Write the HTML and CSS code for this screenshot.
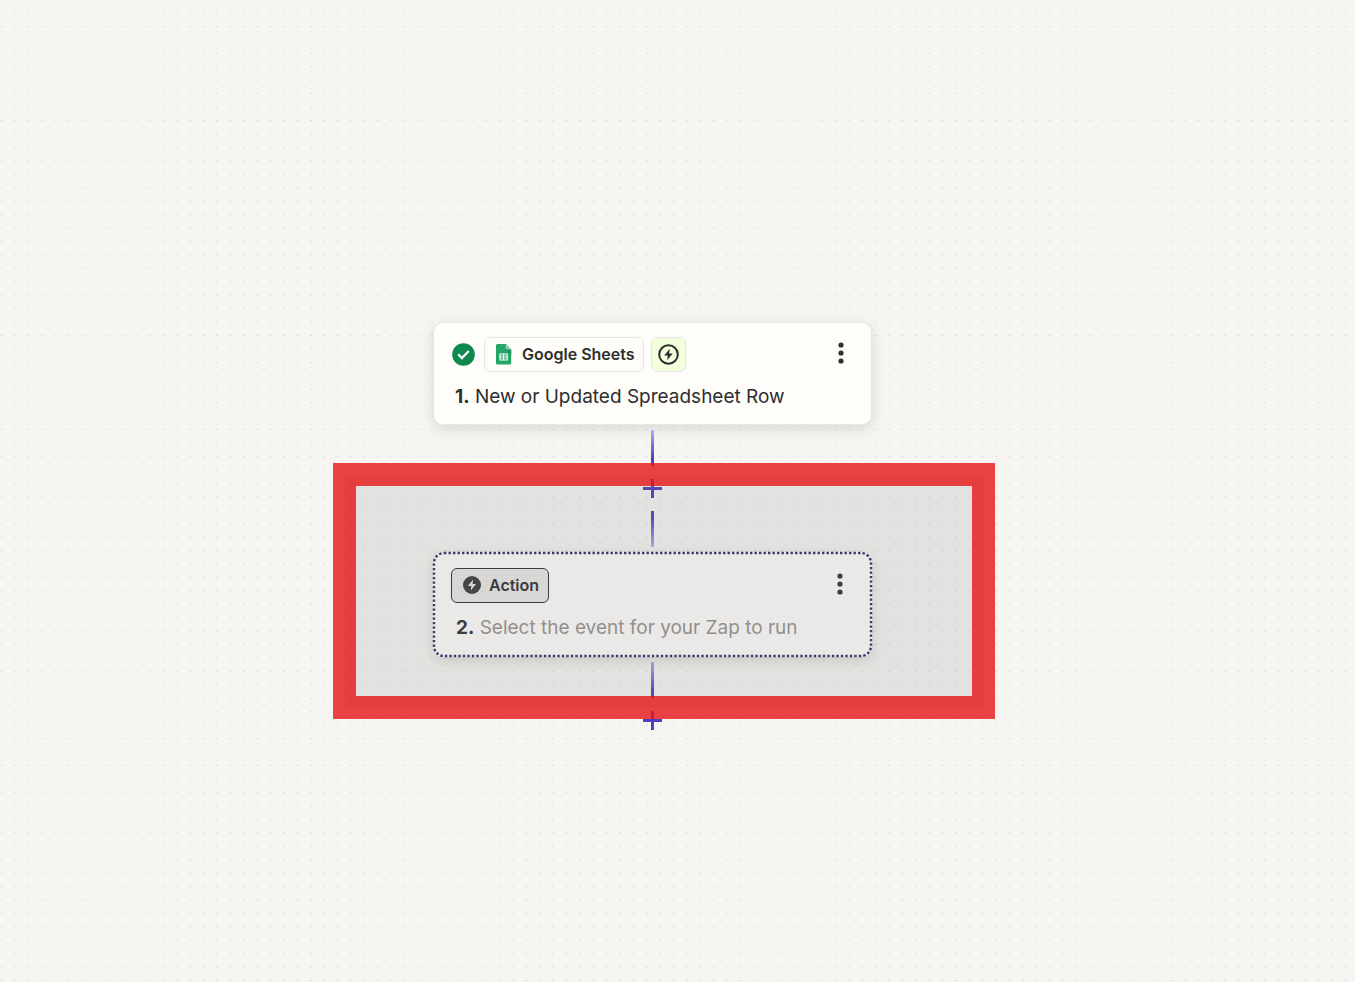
FILE: index.html
```html
<!DOCTYPE html>
<html lang="en">
<head>
  <meta charset="UTF-8">
  <title>Zap editor</title>
  <link rel="stylesheet" href="styles.css">
</head>
<body>
  <main class="canvas">
    <div class="flow">
      <section class="step">
        <div class="step-header">
          <svg class="status" viewBox="0 0 23 23" aria-hidden="true">
            <circle cx="11.5" cy="11.5" r="11.3" fill="#0f884e"/>
            <path d="M6.2 11.3l3.7 3.7 6.9-7" fill="none" stroke="#fff" stroke-width="2.3"/>
          </svg>
          <button class="badge app" type="button">
            <svg width="16" height="21" viewBox="0 0 16 21" aria-hidden="true">
              <path d="M1.5 0H10l5.2 5.5V19a1.5 1.5 0 0 1-1.5 1.5H1.5A1.5 1.5 0 0 1 0 19V1.5A1.5 1.5 0 0 1 1.5 0z" fill="#23a566"/>
              <path d="M10 5.5h5.2V11z" fill="#1c8f57"/>
              <path d="M9.7 0l5.5 5.5h-4A1.5 1.5 0 0 1 9.7 4z" fill="#8ed1b1"/>
              <path d="M3.4 9.5h8.4v7H3.4z" fill="#fff"/>
              <path d="M4.5 10.6h2.6v1.1H4.5zM8.1 10.6h2.6v1.1H8.1zM4.5 12.5h2.6v1H4.5zM8.1 12.5h2.6v1H8.1zM4.5 14.3h2.6v1.1H4.5zM8.1 14.3h2.6v1.1H8.1z" fill="#23a566"/>
            </svg>
            Google Sheets
          </button>
          <button class="badge trigger" type="button" aria-label="Trigger">
            <svg width="21" height="21" viewBox="0 0 21 21" aria-hidden="true">
              <circle cx="10.5" cy="10.5" r="9.3" fill="none" stroke="#2d2e2e" stroke-width="2"/>
              <path d="M11.7 4.8L6.2 11.5h3.6l-.6 4.7 5.5-6.7h-3.6z" fill="#2d2e2e"/>
            </svg>
          </button>
          <button class="menu" type="button" aria-label="Step menu">
            <svg width="6" height="22" viewBox="0 0 6 22" aria-hidden="true">
              <circle cx="3" cy="3" r="2.6"/><circle cx="3" cy="11" r="2.6"/><circle cx="3" cy="19" r="2.6"/>
            </svg>
          </button>
        </div>
        <p class="step-title"><strong>1.</strong> New or Updated Spreadsheet Row</p>
      </section>

      <div class="connector">
        <span class="line"></span>
        <button class="add" type="button" aria-label="Add step"></button>
        <span class="line line-out"></span>
      </div>

      <section class="step step-empty">
        <svg class="outline" aria-hidden="true">
          <rect width="100%" height="100%" rx="10"/>
        </svg>
        <div class="step-header">
          <button class="badge action" type="button">
            <svg width="18" height="18" viewBox="0 0 18 18" aria-hidden="true">
              <circle cx="9" cy="9" r="9" fill="#3b3b3a"/>
              <path d="M10.1 3.6L4.9 9.9h3.4l-.5 4.5L13 8.1H9.6z" fill="#e9e8e4"/>
            </svg>
            Action
          </button>
          <button class="menu" type="button" aria-label="Step menu">
            <svg width="6" height="22" viewBox="0 0 6 22" aria-hidden="true">
              <circle cx="3" cy="3" r="2.6"/><circle cx="3" cy="11" r="2.6"/><circle cx="3" cy="19" r="2.6"/>
            </svg>
          </button>
        </div>
        <p class="step-title"><strong>2.</strong> <span class="placeholder">Select the event for your Zap to run</span></p>
      </section>

      <div class="connector">
        <span class="line"></span>
        <button class="add" type="button" aria-label="Add step"></button>
      </div>

      <div class="highlight"></div>
    </div>
  </main>
</body>
</html>
```

FILE: styles.css
```css
* { box-sizing: border-box; }
body {
  margin: 0;
  font-family: Inter, "Liberation Sans", sans-serif;
  color: #2d2e2e;
}
button {
  padding: 0;
  border: none;
  background: none;
  color: inherit;
  font: inherit;
  cursor: pointer;
}
.canvas {
  display: flex;
  justify-content: center;
  min-height: 100vh;
  padding: 322px 50px 0 0;
  background-color: #f6f5f1;
  background-image: radial-gradient(circle at 2px 12px, #dcdbd7 0, #dcdbd7 1px, transparent 1px);
  background-size: calc(121px / 9) calc(121px / 9);
  background-position: 0 1px;
}
.flow {
  position: relative;
  width: 439px;
  align-self: flex-start;
}

/* step cards */
.step {
  padding: 14px 18px 15px;
  border: 1px solid #e8e7e4;
  border-radius: 10px;
  background: #fffdf9;
  box-shadow: 0 4px 14px rgba(0, 0, 0, 0.12);
}
.step-empty {
  position: relative;
  padding: 16px 18px 17px;
  border: none;
}
.outline {
  position: absolute;
  top: 1px;
  left: 1px;
  width: calc(100% - 2px);
  height: calc(100% - 2px);
  overflow: visible;
  pointer-events: none;
}
.outline rect {
  fill: none;
  stroke: #352c68;
  stroke-width: 2.4;
  stroke-dasharray: 2.4 2.1;
}
.step-header {
  display: flex;
  align-items: center;
  height: 35px;
}
.status {
  width: 23px;
  height: 23px;
  margin-right: 9px;
}
.badge {
  display: flex;
  align-items: center;
  height: 35px;
  border: 1px solid #e8e7e4;
  border-radius: 6px;
  font-size: 16px;
  font-weight: 600;
}
.app {
  gap: 10px;
  padding: 0 8px 1px 11px;
}
.trigger {
  justify-content: center;
  width: 35px;
  margin-left: 7px;
  background: #f3ffdc;
}
.action {
  gap: 8px;
  padding: 0 9px 1px 11px;
  border-color: #2d2e2e;
  background: #e9e8e4;
}
.menu {
  display: flex;
  margin: 0 9px 4px auto;
  fill: #2d2e2e;
}
.step-empty .menu { margin-right: 11px; }
.step-title {
  margin: 13px 0 0 3px;
  font-size: 19px;
  line-height: 24px;
  font-weight: 400;
}
.step-empty .step-title { margin-left: 5px; }
.step-title strong { font-weight: 700; }
.placeholder { color: #95928e; }

/* connectors between steps */
.connector {
  display: flex;
  flex-direction: column;
  align-items: center;
  gap: 13px;
  padding: 5px 0;
}
.line {
  width: 3px;
  height: 36px;
  background: linear-gradient(#b8aaf5, #503ebd 80%);
}
.line-out { background: linear-gradient(#503ebd 20%, #b8aaf5); }
.add {
  width: 19px;
  height: 19px;
  background:
    linear-gradient(#503ebd, #503ebd) center / 3px 19px no-repeat,
    linear-gradient(#503ebd, #503ebd) center / 19px 3px no-repeat;
}

/* callout drawn over the second step */
.highlight {
  position: absolute;
  top: 141px;
  left: -100px;
  width: 662px;
  height: 256px;
  pointer-events: none;
}
.highlight::before,
.highlight::after {
  content: "";
  position: absolute;
}
.highlight::before {
  inset: 12px;
  background: rgba(132, 132, 136, 0.16);
}
.highlight::after {
  inset: 0;
  border: 23px solid rgba(229, 21, 22, 0.8);
}
```
